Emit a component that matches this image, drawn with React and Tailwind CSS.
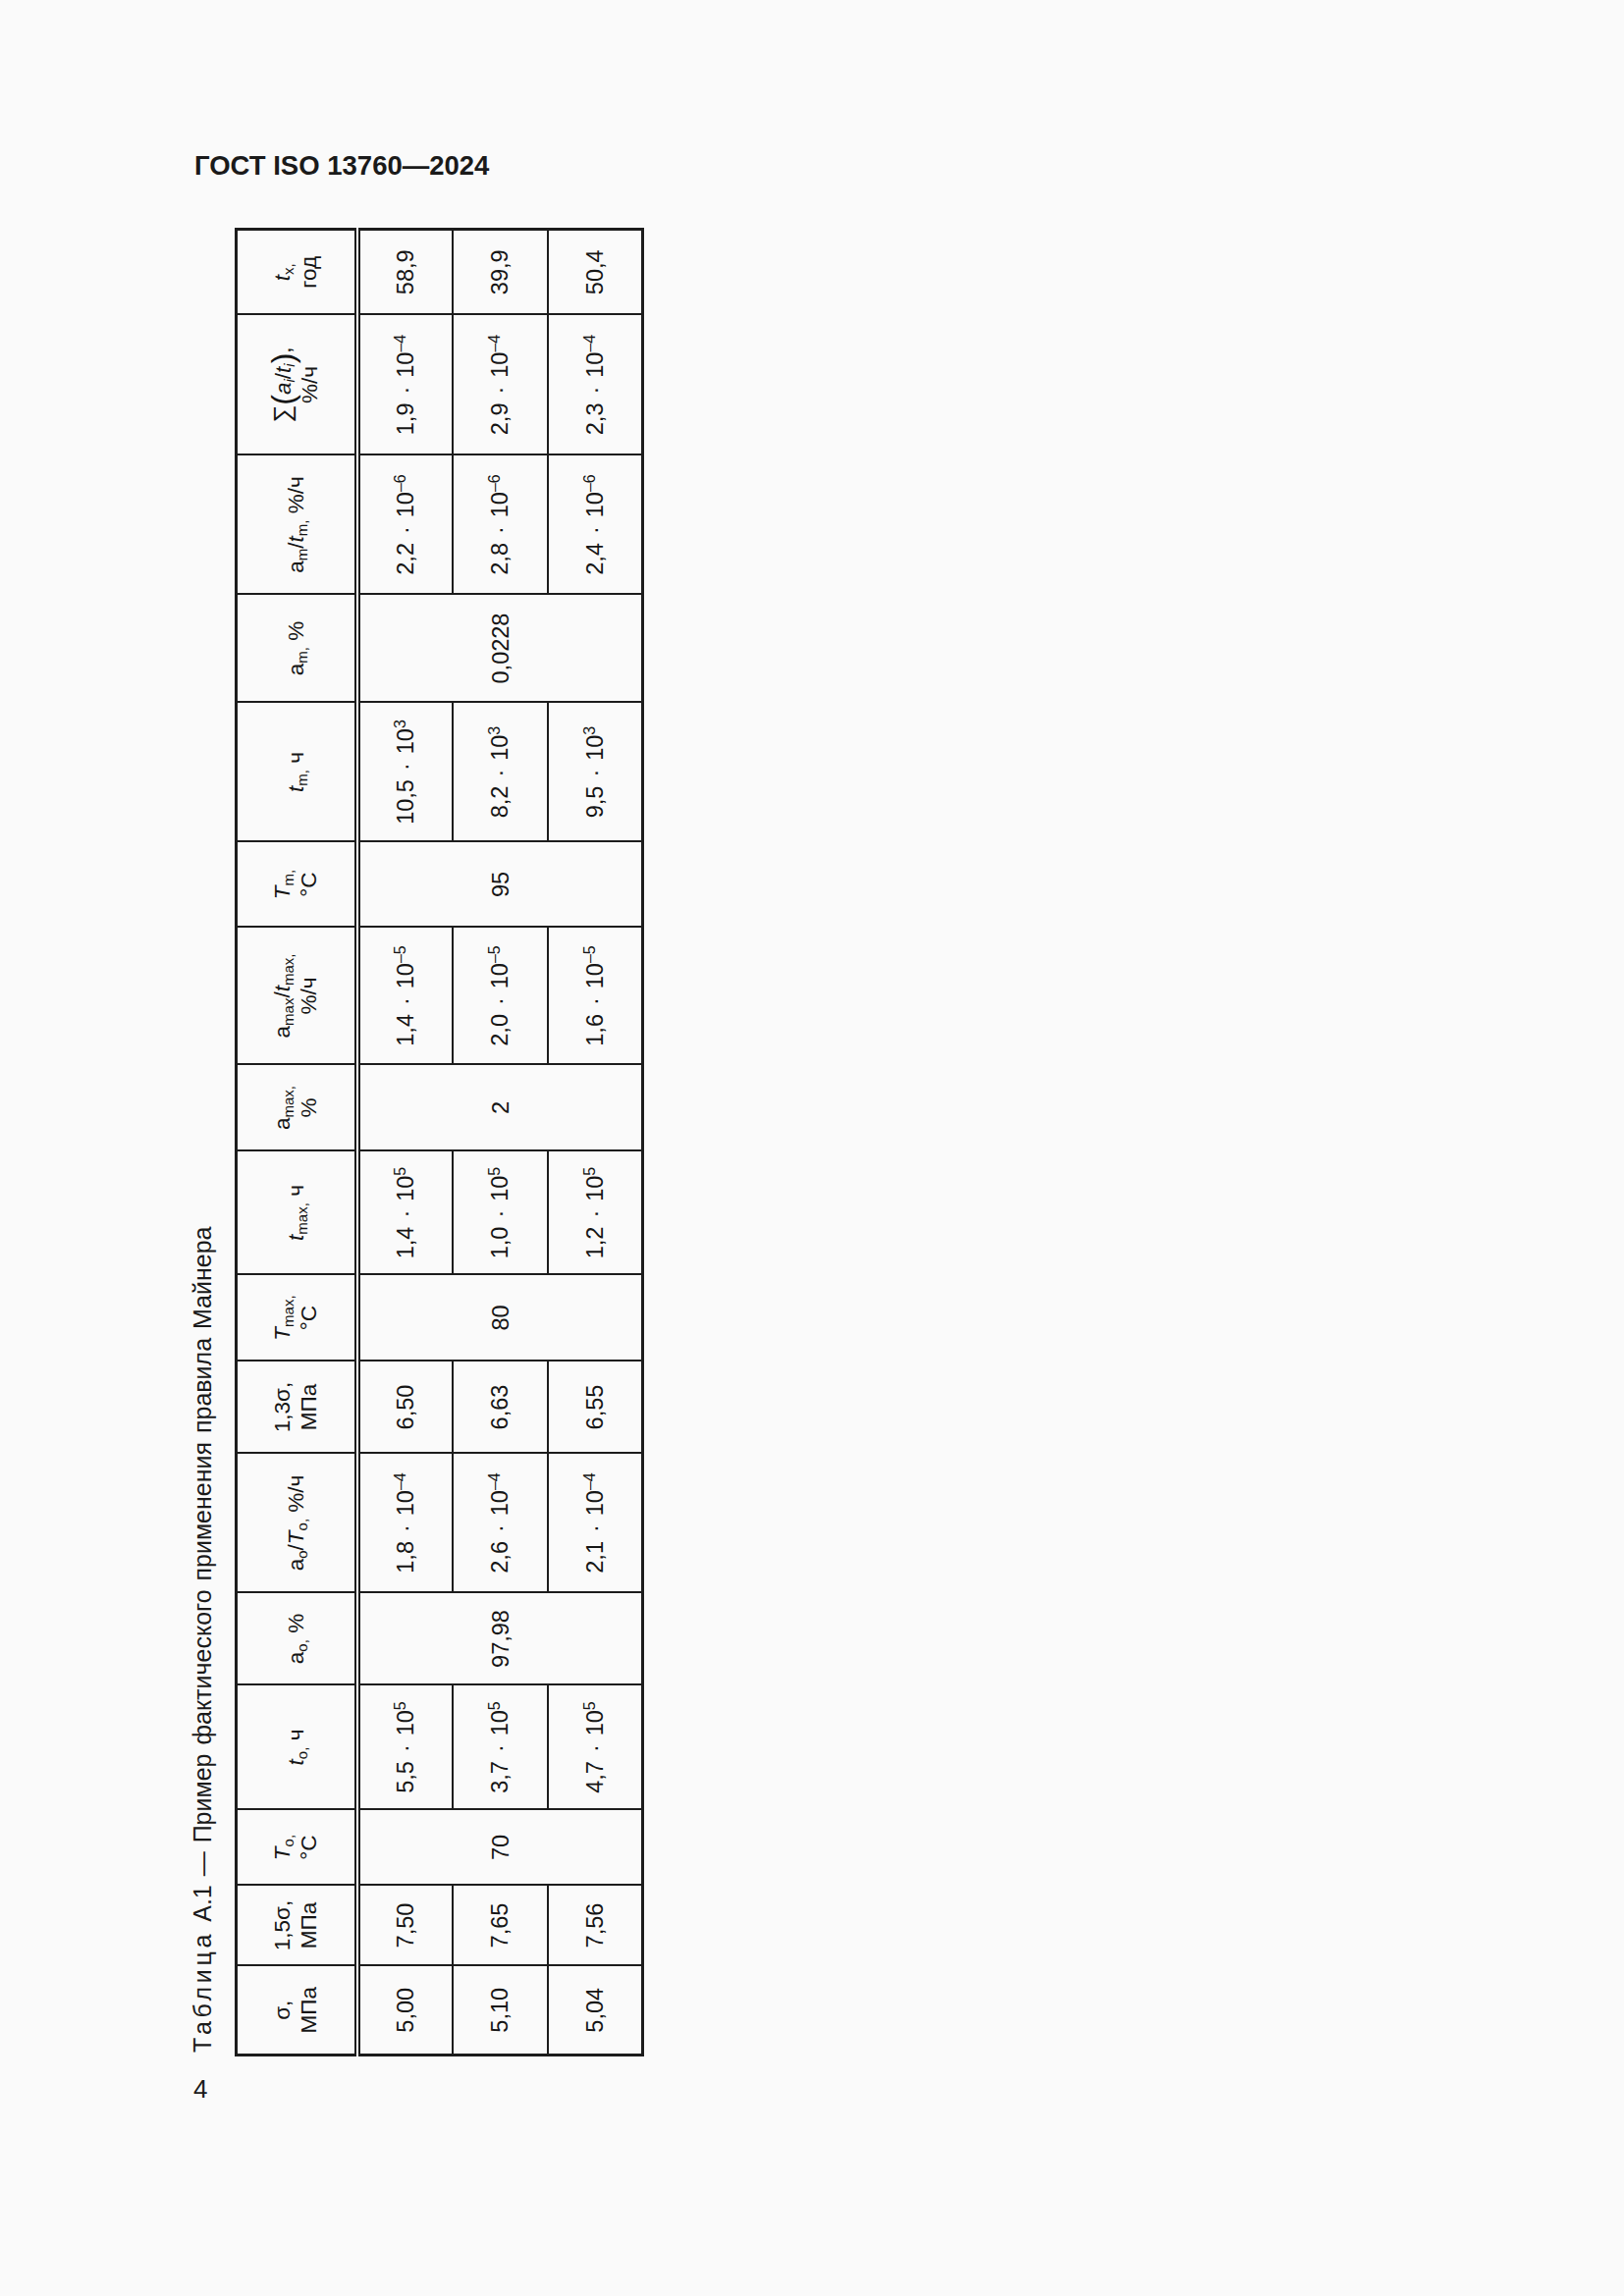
import React from "react";

const Sub = ({ children }) => <sub className="text-[15px]">{children}</sub>;
const Sup = ({ children }) => <sup className="text-[16px]">{children}</sup>;
const I = ({ children }) => <i className="italic">{children}</i>;

const Exp = ({ m, e }) => (
  <span className="whitespace-nowrap">
    {m}
    <span className="mx-[9px]">·</span>10<Sup>{e}</Sup>
  </span>
);

const colW = [
  "w-[91px]", "w-[82px]", "w-[77px]", "w-[127px]", "w-[94px]", "w-[142px]",
  "w-[94px]", "w-[88px]", "w-[126px]", "w-[88px]", "w-[140px]", "w-[87px]",
  "w-[142px]", "w-[110px]", "w-[142px]", "w-[143px]", "w-[87px]",
];

const heads = [
  <>σ,<br />МПа</>,
  <>1,5σ,<br />МПа</>,
  <><I>T</I><Sub>o,</Sub><br />°C</>,
  <><I>t</I><Sub>o,</Sub> ч</>,
  <>a<Sub>o,</Sub> %</>,
  <>a<Sub>o</Sub>/<I>T</I><Sub>o,</Sub> %/ч</>,
  <>1,3σ,<br />МПа</>,
  <><I>T</I><Sub>max,</Sub><br />°C</>,
  <><I>t</I><Sub>max,</Sub> ч</>,
  <>a<Sub>max,</Sub><br />%</>,
  <>a<Sub>max</Sub>/<I>t</I><Sub>max,</Sub><br />%/ч</>,
  <><I>T</I><Sub>m,</Sub><br />°C</>,
  <><I>t</I><Sub>m,</Sub> ч</>,
  <>a<Sub>m,</Sub> %</>,
  <>a<Sub>m</Sub>/<I>t</I><Sub>m,</Sub> %/ч</>,
  <>
    <span className="text-[25px]">∑</span>
    <span className="text-[32px] font-light align-[-3px]">(</span>
    <I>a</I><Sub><I>i</I></Sub>/<I>t</I><Sub><I>i</I></Sub>
    <span className="text-[32px] font-light align-[-3px]">)</span>,
    <br />%/ч
  </>,
  <><I>t</I><Sub>x,</Sub><br />год</>,
];

// null = covered by the merged cell of the first row
const rows = [
  ["5,00", "7,50", "70", <Exp m="5,5" e="5" />, "97,98", <Exp m="1,8" e="–4" />, "6,50", "80", <Exp m="1,4" e="5" />, "2", <Exp m="1,4" e="–5" />, "95", <Exp m="10,5" e="3" />, "0,0228", <Exp m="2,2" e="–6" />, <Exp m="1,9" e="–4" />, "58,9"],
  ["5,10", "7,65", null, <Exp m="3,7" e="5" />, null, <Exp m="2,6" e="–4" />, "6,63", null, <Exp m="1,0" e="5" />, null, <Exp m="2,0" e="–5" />, null, <Exp m="8,2" e="3" />, null, <Exp m="2,8" e="–6" />, <Exp m="2,9" e="–4" />, "39,9"],
  ["5,04", "7,56", null, <Exp m="4,7" e="5" />, null, <Exp m="2,1" e="–4" />, "6,55", null, <Exp m="1,2" e="5" />, null, <Exp m="1,6" e="–5" />, null, <Exp m="9,5" e="3" />, null, <Exp m="2,4" e="–6" />, <Exp m="2,3" e="–4" />, "50,4"],
];
const merged = [2, 4, 7, 9, 11, 13];

const MinerTable = () => (
  <table className="table-fixed border-collapse w-[1860px] border-[3px] border-[#1c1c1c] text-[#151515] font-['Liberation_Sans',Arial,sans-serif]">
    <colgroup>
      {colW.map((c, i) => (
        <col key={i} className={c} />
      ))}
    </colgroup>
    <thead>
      <tr className="h-[123px]">
        {heads.map((h, i) => (
          <th
            key={i}
            className="border-2 border-[#1c1c1c] border-b-[6px] [border-bottom-style:double] p-0 text-[22.5px] font-normal leading-[27px] text-center align-middle"
          >
            {h}
          </th>
        ))}
      </tr>
    </thead>
    <tbody>
      {rows.map((r, ri) => (
        <tr key={ri} className="h-[97px]">
          {r.map((v, ci) =>
            v === null ? null : (
              <td
                key={ci}
                rowSpan={ri === 0 && merged.includes(ci) ? 3 : 1}
                className="border-2 border-[#1c1c1c] p-0 text-[23.5px] leading-[28px] text-center align-middle"
              >
                {v}
              </td>
            )
          )}
        </tr>
      ))}
    </tbody>
  </table>
);

export default function App() {
  return (
    <div className="min-h-[2339px] w-full bg-[#fafafa] pt-[153px] pl-[193px] text-[#1a1a1a] font-['Liberation_Sans',Arial,sans-serif]">
      <div className="pl-[5px] text-[27.5px] leading-[32px] font-bold">ГОСТ ISO 13760—2024</div>

      {/* table is set sideways on the page */}
      <div className="mt-[50px] w-[462px] h-[1860px]">
        <div className="w-[1860px] h-[462px] origin-top-left [transform:translateY(1860px)_rotate(-90deg)]">
          <div className="mt-[3px] pl-[4px] text-[25px] leading-[26px] [word-spacing:2px] whitespace-nowrap">
            <span className="tracking-[0.15em]">Таблица</span> А.1 — Пример фактического применения правила Майнера
          </div>
          <div className="mt-[20px]">
            <MinerTable />
          </div>
        </div>
      </div>

      <div className="mt-[18px] pl-[4px] text-[26px] leading-[30px]">4</div>
    </div>
  );
}
